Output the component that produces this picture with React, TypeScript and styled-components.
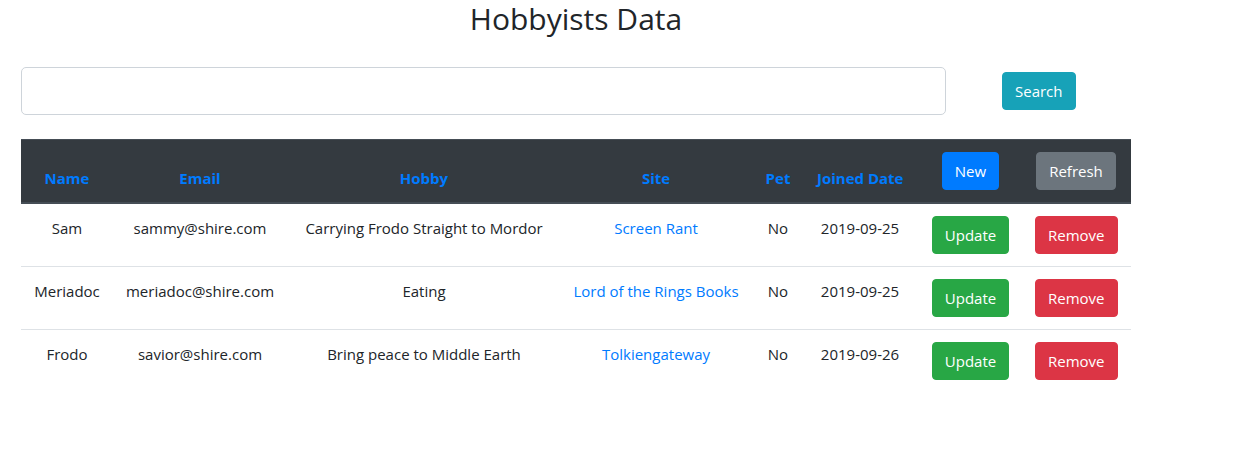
import React from "react";
import styled, { createGlobalStyle } from "styled-components";

const Global = createGlobalStyle`
  html, body { margin: 0; padding: 0; background: #fff; }
  body {
    font-family: "Open Sans", "Noto Sans", sans-serif;
    font-size: 15px;
    line-height: 24px;
    color: #212529;
  }
  * { box-sizing: border-box; }
`;

const Page = styled.div`
  width: 1110px;
  margin-left: 21px;
`;

const Title = styled.h2`
  margin: 0;
  height: 38px;
  text-align: center;
  font-size: 30px;
  line-height: 38px;
  font-weight: 400;
  color: #212529;
`;

const SearchRow = styled.div`
  display: flex;
  align-items: center;
  gap: 56px;
  margin-top: 29px;
  margin-bottom: 24px;
`;

const SearchInput = styled.input`
  width: 925px;
  height: 48px;
  padding: 8px 16px;
  font: inherit;
  font-size: 18px;
  border: 1px solid #ced4da;
  border-radius: 5px;
  outline: none;
`;

const palette = {
  primary: "#007bff",
  secondary: "#6c757d",
  info: "#17a2b8",
  success: "#28a745",
  danger: "#dc3545",
};

const Button = styled.button<{ $variant: keyof typeof palette }>`
  display: inline-block;
  height: 38px;
  padding: 6px 12px;
  font-family: inherit;
  font-size: 15px;
  line-height: 24px;
  font-weight: 400;
  color: #fff;
  border: 1px solid ${(p) => palette[p.$variant]};
  border-radius: 4px;
  cursor: pointer;
  background: ${(p) => palette[p.$variant]};
`;

const Table = styled.table`
  width: 1110px;
  table-layout: fixed;
  border-collapse: collapse;
`;

const HeadRow = styled.tr`
  background: #343a40;
`;

const Th = styled.th`
  padding: 12px;
  text-align: center;
  vertical-align: bottom;
  white-space: nowrap;
  color: #007bff;
  font-weight: 700;
  border-top: 1px solid #454d55;
  border-bottom: 2px solid #454d55;
  &:last-child { padding-left: 9px; padding-right: 14px; }
`;

const Td = styled.td`
  padding: 12px;
  text-align: center;
  vertical-align: top;
  border-top: 1px solid #dee2e6;
  white-space: nowrap;
  &:last-child { padding-left: 9px; padding-right: 14px; }
`;

const Link = styled.a`
  color: #007bff;
  text-decoration: none;
`;

const widths = [92, 174, 274, 190, 54, 110, 111, 105];

const rows = [
  { name: "Sam", email: "sammy@shire.com", hobby: "Carrying Frodo Straight to Mordor", site: "Screen Rant", pet: "No", date: "2019-09-25" },
  { name: "Meriadoc", email: "meriadoc@shire.com", hobby: "Eating", site: "Lord of the Rings Books", pet: "No", date: "2019-09-25" },
  { name: "Frodo", email: "savior@shire.com", hobby: "Bring peace to Middle Earth", site: "Tolkiengateway", pet: "No", date: "2019-09-26" },
];

export default function App() {
  return (
    <>
      <Global />
      <Page>
        <Title>Hobbyists Data</Title>
        <SearchRow>
          <SearchInput type="text" />
          <Button $variant="info">Search</Button>
        </SearchRow>
        <Table>
          <colgroup>
            {widths.map((w, i) => (
              <col key={i} style={{ width: w }} />
            ))}
          </colgroup>
          <thead>
            <HeadRow>
              <Th>Name</Th>
              <Th>Email</Th>
              <Th>Hobby</Th>
              <Th>Site</Th>
              <Th>Pet</Th>
              <Th>Joined Date</Th>
              <Th>
                <Button $variant="primary">New</Button>
              </Th>
              <Th>
                <Button $variant="secondary">Refresh</Button>
              </Th>
            </HeadRow>
          </thead>
          <tbody>
            {rows.map((r) => (
              <tr key={r.name}>
                <Td>{r.name}</Td>
                <Td>{r.email}</Td>
                <Td>{r.hobby}</Td>
                <Td>
                  <Link href="#">{r.site}</Link>
                </Td>
                <Td>{r.pet}</Td>
                <Td>{r.date}</Td>
                <Td>
                  <Button $variant="success">Update</Button>
                </Td>
                <Td>
                  <Button $variant="danger">Remove</Button>
                </Td>
              </tr>
            ))}
          </tbody>
        </Table>
      </Page>
    </>
  );
}
